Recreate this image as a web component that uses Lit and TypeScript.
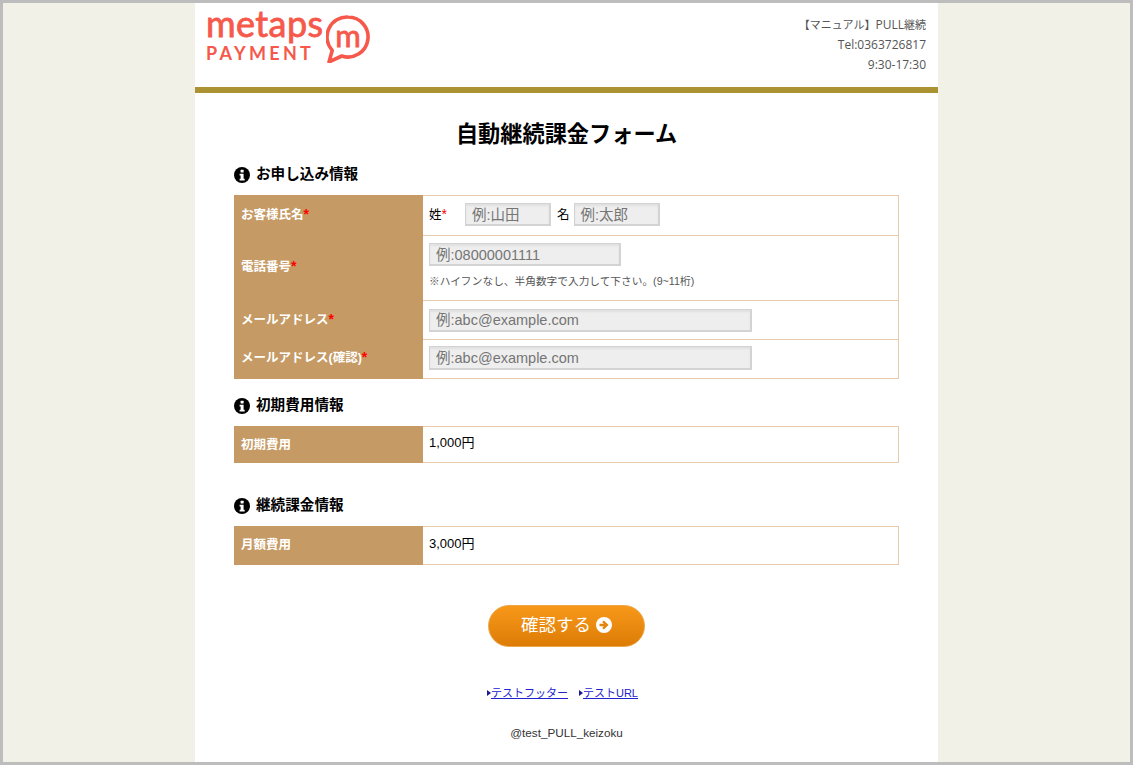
import { LitElement, html, css } from "lit"
import { customElement } from "lit/decorators.js"

const infoIcon = html`<svg class="info" viewBox="0 0 16 16"><circle cx="8" cy="8" r="8" fill="#000"/><rect x="6.6" y="2.8" width="3" height="2.8" rx=".5" fill="#fff"/><path d="M5.6 6.8h4v5h1.1v1.8H5.6v-1.8h1v-3.2h-1z" fill="#fff"/></svg>`

@customElement("app-root")
export class AppRoot extends LitElement {
  static styles = css`
    :host {
      display: block;
      box-sizing: border-box;
      height: 765px;
      border: 3px solid #bdbdbd;
      background: #f2f1e8;
      font-family: "Liberation Sans", "Noto Sans CJK JP", sans-serif;
      color: #000;
      overflow: hidden;
    }
    .page {
      width: 743px;
      height: 759px;
      margin-left: 192px;
      background: #fff;
    }
    header {
      height: 84px;
      border-bottom: 6px solid #ab9232;
      display: flex;
      justify-content: space-between;
    }
    .logo {
      display: flex;
      padding: 4px 0 0 11px;
      color: #f6594b;
    }
    .logo-text {
      width: 120px;
      font-family: "Lato", sans-serif;
    }
    .metaps {
      font-size: 36px;
      line-height: 33px;
      font-weight: 400;
      letter-spacing: 0.4px;
      -webkit-text-stroke: 0.8px #f6594b;
    }
    .payment {
      font-size: 18px;
      line-height: 18px;
      font-weight: 700;
      letter-spacing: 3.3px;
      margin-top: 4px;
    }
    .bubble {
      position: relative;
      width: 44px;
      height: 48px;
      margin-top: 8px;
    }
    .bubble svg {
      position: absolute;
      inset: 0;
    }
    .bubble span {
      position: absolute;
      left: 0;
      right: 0;
      top: 3px;
      text-align: center;
      font-family: "Lato", sans-serif;
      font-size: 31px;
      line-height: 34px;
      -webkit-text-stroke: 0.8px #f6594b;
    }
    .shop {
      padding: 12px 12px 0 0;
      text-align: right;
      font-family: "Open Sans", "Noto Sans CJK JP", sans-serif;
      font-size: 12px;
      line-height: 20px;
      color: #555;
    }
    .shop span {
      font-size: 11px;
    }
    main {
      padding: 0 39px;
    }
    h1 {
      margin: 0;
      padding-top: 28px;
      text-align: center;
      font-size: 22.2px;
      line-height: 28px;
      font-weight: bold;
    }
    h2 {
      display: flex;
      align-items: center;
      gap: 6px;
      margin: 0;
      font-size: 14.6px;
      line-height: 20px;
      font-weight: bold;
    }
    .info {
      width: 16px;
      height: 16px;
      margin-top: 2px;
    }
    .first {
      margin-top: 15px;
    }
    .second {
      margin-top: 16px;
    }
    .third {
      margin-top: 32px;
    }
    table {
      width: 665px;
      border-collapse: collapse;
      table-layout: fixed;
      margin-top: 11px;
      font-size: 12px;
    }
    th,
    td {
      border: 1px solid #e8cba8;
      padding: 0 6px;
    }
    th {
      width: 175px;
      background: #c59a64;
      border-color: #c59a64;
      color: #fff;
      text-align: left;
      font-size: 12.5px;
      font-weight: bold;
      vertical-align: middle;
    }
    th.low {
      padding-bottom: 4px;
    }
    th.mid {
      padding-bottom: 6px;
    }
    th.fee {
      padding-bottom: 3px;
    }
    th.month {
      padding-bottom: 5px;
    }
    th i,
    td i {
      font-style: normal;
      color: #f00;
      font-size: 14px;
    }
    .up {
      padding-bottom: 2px;
    }
    .phone {
      padding-top: 7px;
      padding-bottom: 12px;
      vertical-align: top;
    }
    .names {
      display: flex;
      align-items: center;
      font-size: 12.5px;
    }
    .names span {
      padding-bottom: 2px;
    }
    .names .sei {
      width: 36px;
    }
    .names .mei {
      margin: 0 4px 0 6px;
    }
    .input {
      box-sizing: border-box;
      background: #eeeeee;
      border: 1px solid #d3d3d3;
      border-right-width: 2px;
      border-bottom-width: 2px;
      box-shadow: inset 0 2px 2px #e0e0e0;
      color: #757575;
      font-size: 14.5px;
      padding: 0 0 2px 6px;
      display: flex;
      align-items: center;
    }
    .short {
      width: 86px;
      height: 23px;
    }
    .tel {
      width: 192px;
      height: 23px;
    }
    .mail {
      width: 323px;
      height: 23px;
    }
    .tall {
      height: 24px;
    }
    .note {
      margin-top: 8px;
      font-size: 10.7px;
      line-height: 14px;
      color: #555;
    }
    .value {
      font-size: 13px;
      padding-bottom: 7px;
    }
    .confirm {
      display: flex;
      justify-content: center;
      margin-top: 40px;
    }
    .confirm button {
      display: flex;
      align-items: center;
      justify-content: center;
      gap: 5px;
      width: 157px;
      height: 42px;
      border: 1px solid #eda64a;
      border-radius: 21px;
      background: linear-gradient(#f8981a, #dc7c06);
      color: #fff;
      font: 17.5px "Liberation Sans", "Noto Sans CJK JP", sans-serif;
      padding: 0 0 5px;
    }
    .confirm svg {
      width: 16px;
      height: 16px;
      margin-top: 2px;
    }
    .links {
      display: flex;
      justify-content: center;
      gap: 11px;
      margin-top: 38px;
      padding-right: 8px;
      font-size: 11px;
      line-height: 16px;
    }
    .links a {
      color: #2222cc;
      text-decoration: underline;
    }
    .links span {
      display: flex;
      align-items: center;
    }
    .links b {
      width: 0;
      height: 0;
      border-left: 4px solid #1a1a8c;
      border-top: 3.5px solid transparent;
      border-bottom: 3.5px solid transparent;
    }
    .copy {
      margin-top: 24px;
      text-align: center;
      font-size: 11.7px;
      line-height: 16px;
      color: #333;
    }
  `

  render() {
    return html`
      <div class="page">
        <header>
          <div class="logo">
            <div class="logo-text">
              <div class="metaps">metaps</div>
              <div class="payment">PAYMENT</div>
            </div>
            <div class="bubble">
              <svg viewBox="0 0 44 48">
                <path d="M22 2a20 20 0 1 1-6.2 39L3 47l3.2-11.6A20 20 0 0 1 22 2z" fill="none" stroke="#f6594b" stroke-width="3.6" stroke-linejoin="round"/>
              </svg>
              <span>m</span>
            </div>
          </div>
          <div class="shop">
            <span>【マニュアル】</span>PULL<span>継続</span><br />Tel:0363726817<br />9:30-17:30
          </div>
        </header>
        <main>
          <h1>自動継続課金フォーム</h1>

          <h2 class="first">${infoIcon}お申し込み情報</h2>
          <table>
            <tr style="height:40px">
              <th class="low">お客様氏名<i>*</i></th>
              <td class="up">
                <div class="names">
                  <span class="sei">姓<i>*</i></span>
                  <div class="input short">例:山田</div>
                  <span class="mei">名</span>
                  <div class="input short">例:太郎</div>
                </div>
              </td>
            </tr>
            <tr style="height:65px">
              <th class="mid">電話番号<i>*</i></th>
              <td class="phone">
                <div class="input tel">例:08000001111</div>
                <div class="note">※ハイフンなし、半角数字で入力して下さい。(9~11桁)</div>
              </td>
            </tr>
            <tr style="height:39px">
              <th class="low">メールアドレス<i>*</i></th>
              <td><div class="input mail">例:abc@example.com</div></td>
            </tr>
            <tr style="height:39px">
              <th class="mid">メールアドレス(確認)<i>*</i></th>
              <td class="up"><div class="input mail tall">例:abc@example.com</div></td>
            </tr>
          </table>

          <h2 class="second">${infoIcon}初期費用情報</h2>
          <table>
            <tr style="height:36px">
              <th class="fee">初期費用</th>
              <td class="value">1,000円</td>
            </tr>
          </table>

          <h2 class="third">${infoIcon}継続課金情報</h2>
          <table>
            <tr style="height:38px">
              <th class="month">月額費用</th>
              <td class="value">3,000円</td>
            </tr>
          </table>

          <div class="confirm">
            <button>
              確認する
              <svg viewBox="0 0 16 16"><circle cx="8" cy="8" r="8" fill="#fff"/><path d="M3.5 6.7h4.3L6.2 5l1.6-1.6L12.6 8l-4.8 4.6L6.2 11l1.6-1.7H3.5z" fill="#e5850c"/></svg>
            </button>
          </div>

          <div class="links">
            <span><b></b><a>テストフッター</a></span>
            <span><b></b><a>テストURL</a></span>
          </div>
          <div class="copy">@test_PULL_keizoku</div>
        </main>
      </div>
    `
  }
}
